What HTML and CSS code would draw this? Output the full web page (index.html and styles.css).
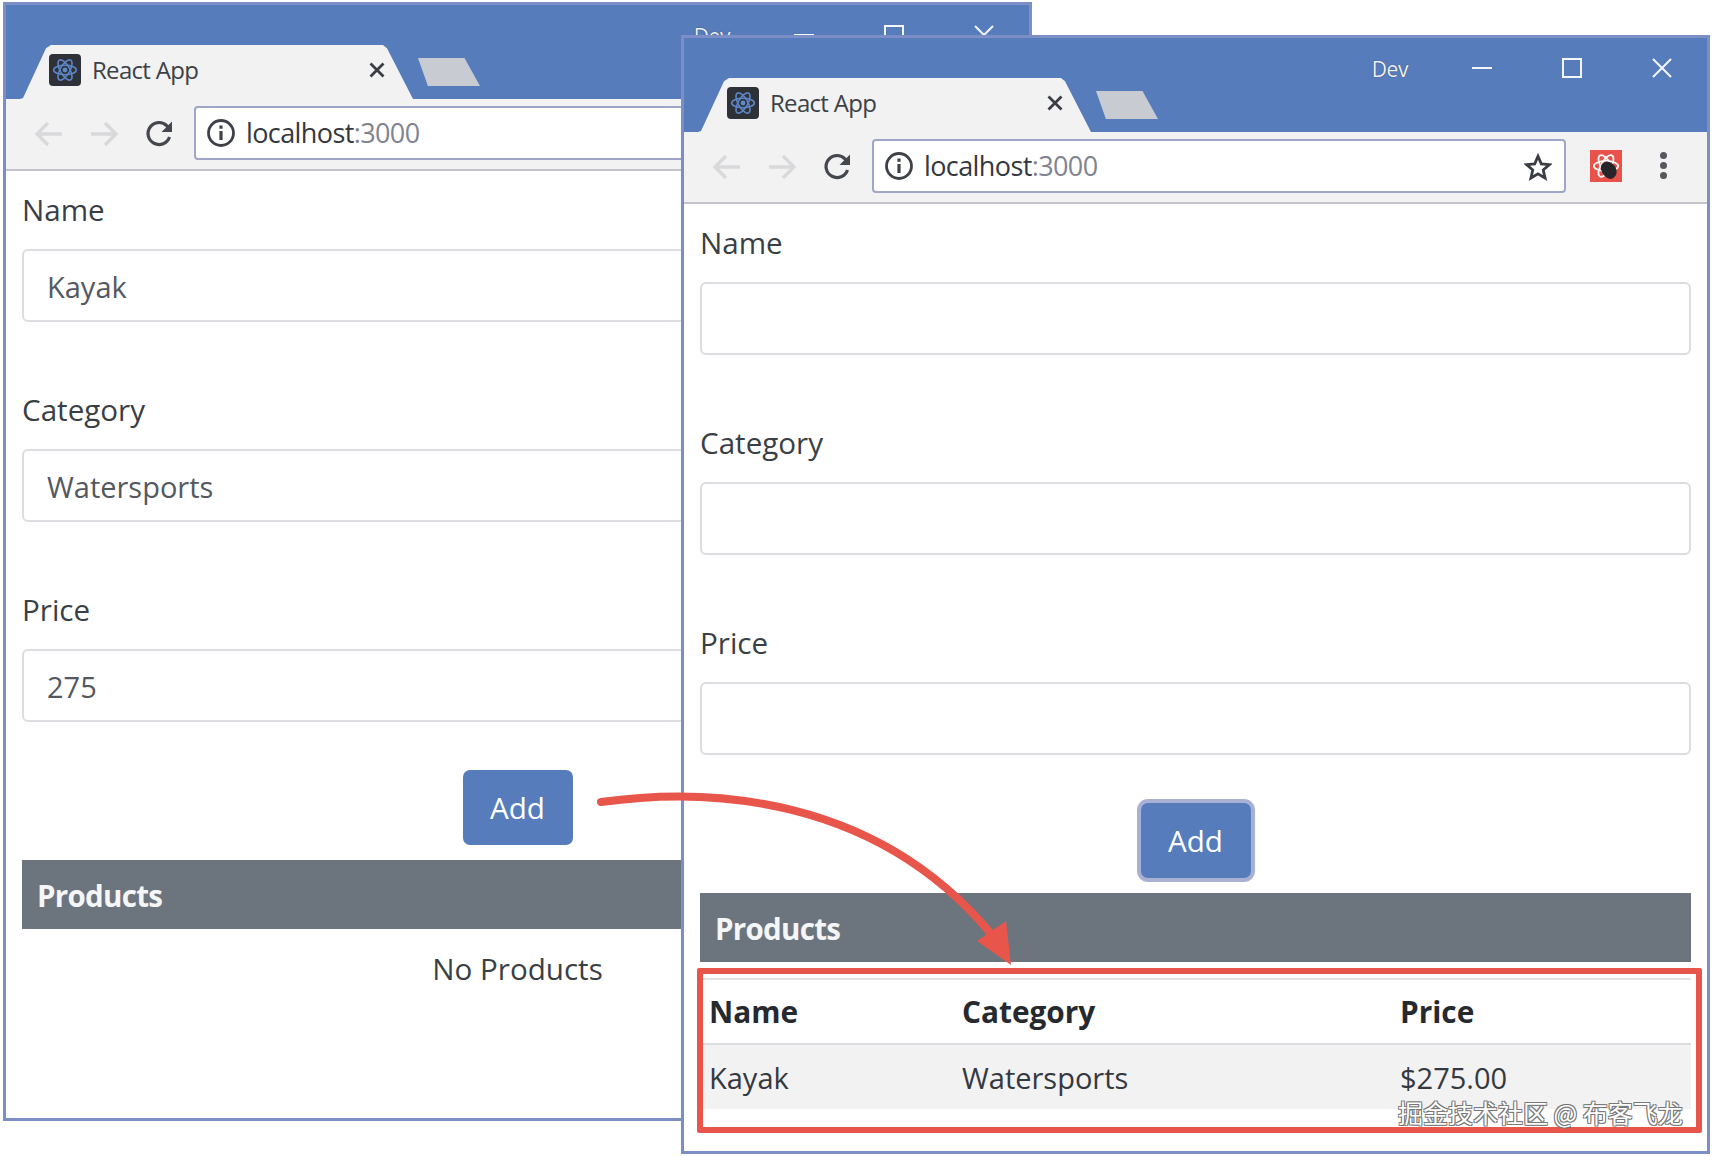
FILE: index.html
```html
<!DOCTYPE html>
<html lang="en">
<head>
<meta charset="utf-8">
<title>React App</title>
<link rel="stylesheet" href="styles.css">
</head>
<body>
<svg class="defs" width="0" height="0" aria-hidden="true">
  <defs>
    <symbol id="atom" viewBox="0 0 32 32">
      <g fill="none" stroke-width="1.8">
        <ellipse cx="16" cy="16" rx="13" ry="5.4"/>
        <ellipse cx="16" cy="16" rx="13" ry="5.4" transform="rotate(60 16 16)"/>
        <ellipse cx="16" cy="16" rx="13" ry="5.4" transform="rotate(120 16 16)"/>
      </g>
      <circle cx="16" cy="16" r="2.8" fill="currentColor" stroke="none"/>
    </symbol>
    <symbol id="back" viewBox="0 0 30 30"><path d="M28 15H4M14 4 3 15l11 11" fill="none" stroke="currentColor" stroke-width="3.4"/></symbol>
    <symbol id="forward" viewBox="0 0 30 30"><path d="M2 15h24M16 4l11 11-11 11" fill="none" stroke="currentColor" stroke-width="3.4"/></symbol>
    <symbol id="reload" viewBox="0 0 30 30"><path d="M25.5 18a11 11 0 1 1-2.6-11.2L26 10" fill="none" stroke="currentColor" stroke-width="3.2"/><path d="M28 2.5V13H17.500z" fill="currentColor"/></symbol>
    <symbol id="info" viewBox="0 0 30 30"><circle cx="15" cy="15" r="12.500" fill="none" stroke="currentColor" stroke-width="2.8"/><path d="M13.400 13h3.200v9h-3.200zM13.400 7.500h3.200v3.200h-3.200z" fill="currentColor"/></symbol>
    <symbol id="star" viewBox="0 0 30 30"><path d="M15 3.500l3.500 8.100 8.800.8-6.700 5.800 2 8.600L15 22.300l-7.600 4.500 2-8.600-6.700-5.800 8.800-.8z" fill="none" stroke="currentColor" stroke-width="3"/></symbol>
    <symbol id="close-tab" viewBox="0 0 18 18"><path d="M2.500 2.500l13 13M15.500 2.500l-13 13" fill="none" stroke="currentColor" stroke-width="2.800"/></symbol>
    <symbol id="win-min" viewBox="0 0 20 20"><path d="M0 10h20" stroke="currentColor" stroke-width="2"/></symbol>
    <symbol id="win-max" viewBox="0 0 20 20"><rect x="1" y="1" width="18" height="18" fill="none" stroke="currentColor" stroke-width="2"/></symbol>
    <symbol id="win-close" viewBox="0 0 20 20"><path d="M1 1l18 18M19 1 1 19" fill="none" stroke="currentColor" stroke-width="2"/></symbol>
  </defs>
</svg>

<section class="window window-left">
  <header class="titlebar">
    <div class="controls">
      <span class="dev">Dev</span>
      <svg class="ctl ctl-min"><use href="#win-min"/></svg>
      <svg class="ctl ctl-max"><use href="#win-max"/></svg>
      <svg class="ctl ctl-close"><use href="#win-close"/></svg>
    </div>
    <div class="tabs">
      <div class="tab">
        <span class="favicon"><svg class="favicon-atom"><use href="#atom"/></svg></span>
        <span class="tab-title">React App</span>
        <svg class="tab-close"><use href="#close-tab"/></svg>
      </div>
      <div class="newtab"></div>
    </div>
  </header>
  <div class="toolbar">
    <svg class="nav nav-off"><use href="#back"/></svg>
    <svg class="nav nav-off"><use href="#forward"/></svg>
    <svg class="nav nav-on"><use href="#reload"/></svg>
    <div class="omnibox">
      <svg class="info"><use href="#info"/></svg>
      <span class="url">localhost<span class="port">:3000</span></span>
      <svg class="star"><use href="#star"/></svg>
    </div>
    <span class="ext"><svg class="ext-atom"><use href="#atom"/></svg><span class="ext-blob"></span></span>
    <span class="menu"><i></i><i></i><i></i></span>
  </div>
  <main class="content">
    <div class="group"><label class="label">Name</label><div class="input">Kayak</div></div>
    <div class="group"><label class="label">Category</label><div class="input">Watersports</div></div>
    <div class="group"><label class="label">Price</label><div class="input">275</div></div>
    <div class="actions"><button class="btn">Add</button></div>
    <div class="products-head">Products</div>
    <p class="empty">No Products</p>
  </main>
</section>

<section class="window window-right">
  <header class="titlebar">
    <div class="controls">
      <span class="dev">Dev</span>
      <svg class="ctl ctl-min"><use href="#win-min"/></svg>
      <svg class="ctl ctl-max"><use href="#win-max"/></svg>
      <svg class="ctl ctl-close"><use href="#win-close"/></svg>
    </div>
    <div class="tabs">
      <div class="tab">
        <span class="favicon"><svg class="favicon-atom"><use href="#atom"/></svg></span>
        <span class="tab-title">React App</span>
        <svg class="tab-close"><use href="#close-tab"/></svg>
      </div>
      <div class="newtab"></div>
    </div>
  </header>
  <div class="toolbar">
    <svg class="nav nav-off"><use href="#back"/></svg>
    <svg class="nav nav-off"><use href="#forward"/></svg>
    <svg class="nav nav-on"><use href="#reload"/></svg>
    <div class="omnibox">
      <svg class="info"><use href="#info"/></svg>
      <span class="url">localhost<span class="port">:3000</span></span>
      <svg class="star"><use href="#star"/></svg>
    </div>
    <span class="ext"><svg class="ext-atom"><use href="#atom"/></svg><span class="ext-blob"></span></span>
    <span class="menu"><i></i><i></i><i></i></span>
  </div>
  <main class="content">
    <div class="group"><label class="label">Name</label><div class="input"></div></div>
    <div class="group"><label class="label">Category</label><div class="input"></div></div>
    <div class="group"><label class="label">Price</label><div class="input"></div></div>
    <div class="actions"><button class="btn btn-focus">Add</button></div>
    <div class="products-head">Products</div>
    <table class="table">
      <colgroup><col class="col-name"><col class="col-cat"><col class="col-price"></colgroup>
      <thead><tr><th>Name</th><th>Category</th><th>Price</th></tr></thead>
      <tbody><tr><td>Kayak</td><td>Watersports</td><td>$275.00</td></tr></tbody>
    </table>
  </main>
</section>

<div class="callout-frame"></div>
<svg class="callout-arrow" viewBox="0 0 1713 1156">
  <path class="arrow-line" d="M601 802C700 788 880 790 1000 945"/>
  <path class="arrow-head" d="M1011 965 977 941 1006 921z"/>
</svg>
<div class="watermark">掘金技术社区 @ 布客飞龙</div>
</body>
</html>
```
FILE: styles.css
```css
* { box-sizing: border-box; }
html, body { margin: 0; height: 1156px; background: #fff; overflow: hidden; }
body { position: relative; font-family: "Open Sans", "Noto Sans", sans-serif; color: #34393f; }
.defs { position: absolute; }

.window {
  position: absolute;
  display: flex;
  flex-direction: column;
  background: #fff;
  border: 3px solid #7b8fc6;
  overflow: hidden;
}
.window-left { left: 3px; top: 2px; width: 1029px; height: 1119px; }
.window-right { left: 681px; top: 35px; width: 1029px; height: 1119px; }

/* title bar */
.titlebar { height: 94px; flex: none; background: #567cbc; display: flex; flex-direction: column; }
.controls { height: 40px; flex: none; padding-top: 20px; display: flex; align-items: flex-start; position: relative; justify-content: flex-end; color: #fff; }
.dev { font-size: 21px; line-height: 24px; margin: -1px 64px 0 0; color: #eef1f7; letter-spacing: -.4px; text-shadow: 0 0 1px #2c3444; }
.ctl { width: 20px; height: 20px; color: #f4f6fb; }
.ctl-min { margin-right: 70px; }
.ctl-max { margin-right: 70px; }
.ctl-close { margin-right: 35px; }

.tabs { height: 54px; flex: none; display: flex; padding-left: 14px; align-items: flex-start; }
.tab {
  width: 393px;
  height: 54px;
  flex: none;
  background: #f2f2f2;
  display: flex;
  align-items: center;
  padding: 0 27px 4px 29px;
  clip-path: polygon(0 100%, 3px 98%, 26px 6%, 31px 0, calc(100% - 30px) 0, calc(100% - 26px) 6%, 100% 100%);
}
.favicon { width: 32px; height: 32px; flex: none; border-radius: 4px; background: #2e3138; display: flex; align-items: center; justify-content: center; color: #5f8ac9; }
.favicon-atom { width: 28px; height: 28px; stroke: #5c86c6; }
.tab-title { margin-left: 11px; font-size: 24px; line-height: 32px; color: #3c4147; letter-spacing: -.7px; }
.tab-close { width: 18px; height: 18px; margin-left: auto; color: #3a3d42; }
.newtab {
  width: 62px; height: 28px; margin: 13px 0 0 5px; flex: none;
  background: #c9cbd2;
  clip-path: polygon(0 0, 75% 0, 100% 100%, 16% 100%);
}

/* toolbar */
.toolbar { height: 72px; flex: none; background: #f2f2f2; border-bottom: 2px solid #c3c4cb; display: flex; align-items: center; padding: 0 0 3px 28px; }
.nav { width: 30px; height: 30px; flex: none; margin-top: 3px; }
.nav + .nav { margin-left: 25px; }
.nav-off { color: #d9d9dc; }
.nav-on { color: #44484e; }
.omnibox {
  width: 694px; height: 54px; margin-left: 20px; flex: none;
  background: #fff; border: 2px solid #a0a6c9; border-radius: 4px;
  display: flex; align-items: center; padding: 0 12px 0 10px;
}
.info { width: 30px; height: 30px; flex: none; color: #3e4248; }
.url { margin-left: 10px; font-size: 27px; line-height: 36px; color: #34383e; letter-spacing: -.6px; }
.port { color: #7f8490; }
.star { width: 28px; height: 28px; margin: 2px 0 0 auto; color: #3a3e44; }
.ext { width: 32px; height: 32px; margin-left: 24px; flex: none; background: #e8524a; color: #fff; position: relative; display: flex; align-items: center; justify-content: center; }
.ext-atom { width: 30px; height: 30px; stroke: #fff; }
.ext-blob { position: absolute; right: 6px; bottom: 3px; width: 14px; height: 18px; background: #26262a; border-radius: 50% 60% 60% 50%; transform: rotate(-35deg); }
.menu { margin-left: 38px; width: 8px; display: flex; flex-direction: column; gap: 3px; }
.menu i { width: 7px; height: 7px; border-radius: 50%; background: #55585d; }

/* page content */
.content { flex: 1; padding: 16px 16px 0 16px; min-height: 0; }
.group { margin-bottom: 65px; }
.label { display: block; font-size: 29.6px; line-height: 45px; margin-bottom: 17px; color: #3a3f45; }
.input { height: 73px; border: 2px solid #dcdde0; border-radius: 6px; padding: 0 23px; font-size: 29px; line-height: 71px; color: #53595f; }
.actions { display: flex; justify-content: center; margin-top: -17px; }
.btn {
  height: 75px; width: 110px; border: 0; border-radius: 7px;
  background: #567cbc; color: #fff;
  font: 29.6px/72px "Open Sans", sans-serif;
}
.btn-focus { box-shadow: 0 0 0 4px #a8b0d4; }
.products-head { height: 69px; margin-top: 15px; padding-left: 15px; background: #6c757d; color: #f5f6f7; font-size: 29.5px; line-height: 72px; font-weight: 700; letter-spacing: -.7px; }
.empty { margin: 17px 0 0; font-size: 29.6px; line-height: 45px; text-align: center; color: #3a3f45; }

.table { width: 100%; margin-top: 16px; border-collapse: collapse; table-layout: fixed; font-size: 29px; color: #34393f; }
.col-name { width: 253px; }
.col-cat { width: 438px; }
.table th { height: 65px; padding: 0 9px; text-align: left; font-size: 29.8px; font-weight: 700; border-top: 2px solid #e0e1e3; border-bottom: 2px solid #dcdde0; color: #26292e; }
.table td { height: 65px; padding: 0 9px; background: #f2f2f2; }

/* annotations */
.callout-frame { position: absolute; left: 697px; top: 968px; width: 1005px; height: 165px; border: 6px solid #e8554b; border-radius: 2px; }
.callout-arrow { position: absolute; left: 0; top: 0; width: 1713px; height: 1156px; }
.arrow-line { fill: none; stroke: #e8554b; stroke-width: 8; stroke-linecap: round; }
.arrow-head { fill: #e8554b; }
.watermark {
  position: absolute; left: 1398px; top: 1095px;
  font-family: "Noto Sans CJK SC", sans-serif; font-size: 25px; line-height: 34px; white-space: nowrap;
  color: #fff;
  text-shadow: -1px -1px 0 #777, 1px -1px 0 #777, -1px 1px 0 #777, 1px 1px 0 #777;
}
```
